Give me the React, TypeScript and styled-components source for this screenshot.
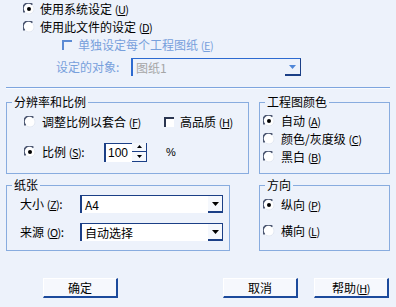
import React from "react";
import styled, { createGlobalStyle } from "styled-components";

const GlobalStyle = createGlobalStyle`
  html, body {
    margin: 0;
    padding: 0;
    background: #edf2fb;
  }
  body {
    font-family: "Noto Sans CJK SC", "DejaVu Sans", sans-serif;
    font-size: 12px;
    color: #000;
  }
`;

function Radio({ checked }: { checked?: boolean }) {
  return (
    <RadioIcon width="12" height="12" viewBox="0 0 12 12">
      <circle cx="6" cy="6" r="5.5" fill="#fff" />
      <path d="M1.6 9.4 A5 5 0 0 1 9.4 1.6" fill="none" stroke="#4b5670" strokeWidth="1.6" />
      <path d="M9.6 2.4 A5 5 0 0 1 2.4 9.6" fill="none" stroke="#dfe6f2" strokeWidth="1" />
      {checked && <circle cx="6" cy="6" r="2" fill="#000" />}
    </RadioIcon>
  );
}

function Hot({ k }: { k: string }) {
  return (
    <Mnemonic>
      (<u>{k}</u>)
    </Mnemonic>
  );
}

function Arrow({ color }: { color: string }) {
  return (
    <svg width="7" height="4" viewBox="0 0 7 4">
      <path d="M0 0 H7 L3.5 4 Z" fill={color} />
    </svg>
  );
}

export default function App() {
  return (
    <Page>
      <GlobalStyle />
      <OptionRow $indent={17}>
        <Radio checked />
        <span>
          使用系统设定 <Hot k="U" />
        </span>
      </OptionRow>
      <OptionRow $indent={17}>
        <Radio />
        <span>
          使用此文件的设定 <Hot k="D" />
        </span>
      </OptionRow>
      <OptionRow $indent={56} $h={17} $gap={6} $muted>
        <Check $muted />
        <span>
          单独设定每个工程图纸 <Hot k="E" />
        </span>
      </OptionRow>
      <ObjectRow>
        <ObjectLabel>设定的对象:</ObjectLabel>
        <DisabledSelect>
          <span>图纸1</span>
          <DisabledArrow>
            <Arrow color="#4f86d8" />
          </DisabledArrow>
        </DisabledSelect>
      </ObjectRow>
      <Separator />

      <GroupRow $top={6}>
        <Group $w={243}>
          <Legend>分辨率和比例</Legend>
          <GroupBody $pad="4px 0 11px 17px">
            <FieldRow>
              <Cell $w={140}>
                <Radio />
                <span>
                  调整比例以套合 <Hot k="F" />
                </span>
              </Cell>
              <Cell>
                <Check />
                <span>
                  高品质 <Hot k="H" />
                </span>
              </Cell>
            </FieldRow>
            <FieldRow $top={11} $h={20}>
              <Cell $w={80}>
                <Radio checked />
                <span>
                  比例 <Hot k="S" />:
                </span>
              </Cell>
              <Spin>
                <SpinInput>100</SpinInput>
                <SpinButtons>
                  <SpinHalf>
                    <svg width="5" height="3" viewBox="0 0 5 3">
                      <path d="M0 3 H5 L2.5 0 Z" fill="#000" />
                    </svg>
                  </SpinHalf>
                  <SpinHalf>
                    <svg width="5" height="3" viewBox="0 0 5 3">
                      <path d="M0 0 H5 L2.5 3 Z" fill="#000" />
                    </svg>
                  </SpinHalf>
                </SpinButtons>
              </Spin>
              <Percent>%</Percent>
            </FieldRow>
          </GroupBody>
        </Group>
        <Group $w={131}>
          <Legend>工程图颜色</Legend>
          <GroupBody $pad="3px 0 0 3px">
            <FieldRow>
              <Cell>
                <Radio checked />
                <span>
                  自动 <Hot k="A" />
                </span>
              </Cell>
            </FieldRow>
            <FieldRow>
              <Cell>
                <Radio />
                <span>
                  颜色/灰度级 <Hot k="C" />
                </span>
              </Cell>
            </FieldRow>
            <FieldRow>
              <Cell>
                <Radio />
                <span>
                  黑白 <Hot k="B" />
                </span>
              </Cell>
            </FieldRow>
          </GroupBody>
        </Group>
      </GroupRow>

      <GroupRow $top={4}>
        <Group $w={224}>
          <Legend>纸张</Legend>
          <GroupBody $pad="3px 0 9px 13px">
            <FieldRow>
              <FieldLabel>
                大小 <Hot k="Z" />:
              </FieldLabel>
              <Select>
                <span>A4</span>
                <SelectArrow>
                  <Arrow color="#000" />
                </SelectArrow>
              </Select>
            </FieldRow>
            <FieldRow $top={10}>
              <FieldLabel>
                来源 <Hot k="O" />:
              </FieldLabel>
              <Select>
                <span>自动选择</span>
                <SelectArrow>
                  <Arrow color="#000" />
                </SelectArrow>
              </Select>
            </FieldRow>
          </GroupBody>
        </Group>
        <Group $w={131}>
          <Legend>方向</Legend>
          <GroupBody $pad="4px 0 0 3px">
            <FieldRow>
              <Cell>
                <Radio checked />
                <span>
                  纵向 <Hot k="P" />
                </span>
              </Cell>
            </FieldRow>
            <FieldRow $top={8}>
              <Cell>
                <Radio />
                <span>
                  横向 <Hot k="L" />
                </span>
              </Cell>
            </FieldRow>
          </GroupBody>
        </Group>
      </GroupRow>

      <ButtonBar>
        <Button>确定</Button>
        <Spacer />
        <Button>取消</Button>
        <Button>
          帮助 <Hot k="H" />
        </Button>
      </ButtonBar>
    </Page>
  );
}

const Page = styled.div`
  width: 396px;
  height: 307px;
  box-sizing: border-box;
  padding: 0 6px;
  display: flex;
  flex-direction: column;
  overflow: hidden;
`;

const RadioIcon = styled.svg`
  flex: none;
  display: block;
`;

const Mnemonic = styled.span`
  font-size: 11px;
  letter-spacing: -0.5px;
`;

const OptionRow = styled.div<{ $indent: number; $h?: number; $gap?: number; $muted?: boolean }>`
  display: flex;
  align-items: center;
  height: ${(p) => p.$h ?? 18}px;
  padding-left: ${(p) => p.$indent}px;
  gap: ${(p) => p.$gap ?? 5}px;
  line-height: 14px;
  white-space: nowrap;
  color: ${(p) => (p.$muted ? "#78a0dc" : "#000")};
`;

const Check = styled.span<{ $muted?: boolean }>`
  flex: none;
  width: 10px;
  height: 10px;
  box-sizing: border-box;
  border-top: 2px solid ${(p) => (p.$muted ? "#5b8ad4" : "#2a3550")};
  border-left: 2px solid ${(p) => (p.$muted ? "#5b8ad4" : "#2a3550")};
  background: ${(p) => (p.$muted ? "transparent" : "#fff")};
`;

const ObjectRow = styled.div`
  display: flex;
  align-items: center;
  height: 18px;
  margin-top: 5px;
  padding-left: 50px;
  line-height: 14px;
`;

const ObjectLabel = styled.span`
  width: 75px;
  color: #78a0dc;
`;

const DisabledSelect = styled.div`
  width: 170px;
  height: 18px;
  box-sizing: border-box;
  display: flex;
  align-items: center;
  justify-content: space-between;
  padding-left: 3px;
  border-top: 1px solid #2d6ad0;
  border-left: 2px solid #2d6ad0;
  border-right: 1px solid #1b3f86;
  color: #a6a6a6;
`;

const DisabledArrow = styled.div`
  width: 15px;
  height: 17px;
  box-sizing: border-box;
  display: flex;
  align-items: center;
  justify-content: center;
  border-bottom: 2px solid #1b3f86;
`;

const Separator = styled.div`
  height: 1px;
  margin-top: 11px;
  background: #7ea5de;
  border-bottom: 1px solid #f8fbff;
`;

const GroupRow = styled.div<{ $top: number }>`
  display: flex;
  justify-content: space-between;
  margin-top: ${(p) => p.$top}px;
`;

const Group = styled.fieldset<{ $w: number }>`
  width: ${(p) => p.$w}px;
  box-sizing: border-box;
  margin: 0;
  padding: 0;
  min-width: 0;
  border: 1px solid #88acdf;
`;

const Legend = styled.legend`
  margin-left: 5px;
  padding: 0 2px;
  line-height: 14px;
  height: 14px;
  white-space: nowrap;
`;

const GroupBody = styled.div<{ $pad: string }>`
  padding: ${(p) => p.$pad};
  display: flex;
  flex-direction: column;
`;

const FieldRow = styled.div<{ $top?: number; $h?: number }>`
  display: flex;
  align-items: center;
  height: ${(p) => p.$h ?? 18}px;
  margin-top: ${(p) => p.$top ?? 0}px;
  line-height: 14px;
  white-space: nowrap;
`;

const Cell = styled.div<{ $w?: number }>`
  display: flex;
  align-items: center;
  gap: 6px;
  width: ${(p) => (p.$w ? `${p.$w}px` : "auto")};
  flex: none;
`;

const Spin = styled.div`
  display: flex;
  height: 19px;
  width: 43px;
`;

const SpinInput = styled.div`
  width: 28px;
  box-sizing: border-box;
  background: #fff;
  border-top: 1px solid #1b3f86;
  border-left: 2px solid #1b3f86;
  padding: 2px 0 0 2px;
  font-family: "Liberation Sans", Arial, sans-serif;
  font-size: 12px;
`;

const SpinButtons = styled.div`
  width: 15px;
  display: flex;
  flex-direction: column;
`;

const SpinHalf = styled.div`
  flex: 1;
  display: flex;
  align-items: center;
  justify-content: center;
  background: #f5f8fd;
  border-right: 1px solid #1b3f86;
  border-bottom: 1px solid #1b3f86;
  box-sizing: border-box;
`;

const Percent = styled.span`
  margin-left: 19px;
  font-family: "Liberation Sans", Arial, sans-serif;
  font-size: 11px;
`;

const FieldLabel = styled.span`
  width: 60px;
  flex: none;
`;

const Select = styled.div`
  width: 143px;
  height: 18px;
  box-sizing: border-box;
  display: flex;
  align-items: center;
  justify-content: space-between;
  background: #fff;
  border-top: 1px solid #1b3f86;
  border-left: 2px solid #1b3f86;
  padding-left: 3px;
  line-height: 14px;
`;

const SelectArrow = styled.div`
  width: 15px;
  height: 17px;
  box-sizing: border-box;
  display: flex;
  align-items: center;
  justify-content: center;
  background: #f5f8fd;
  border-right: 1px solid #1b3f86;
  border-bottom: 2px solid #1b3f86;
`;

const ButtonBar = styled.div`
  display: flex;
  gap: 16px;
  margin-top: 27px;
  padding: 0 1px 0 37px;
`;

const Spacer = styled.div`
  flex: 1;
`;

const Button = styled.div`
  width: 75px;
  height: 20px;
  box-sizing: border-box;
  display: flex;
  align-items: center;
  justify-content: center;
  background: #f6f8fd;
  border-top: 1px solid #ffffff;
  border-left: 1px solid #ffffff;
  border-right: 2px solid #1c4a9c;
  border-bottom: 2px solid #1c4a9c;
  line-height: 14px;
  white-space: nowrap;
`;
